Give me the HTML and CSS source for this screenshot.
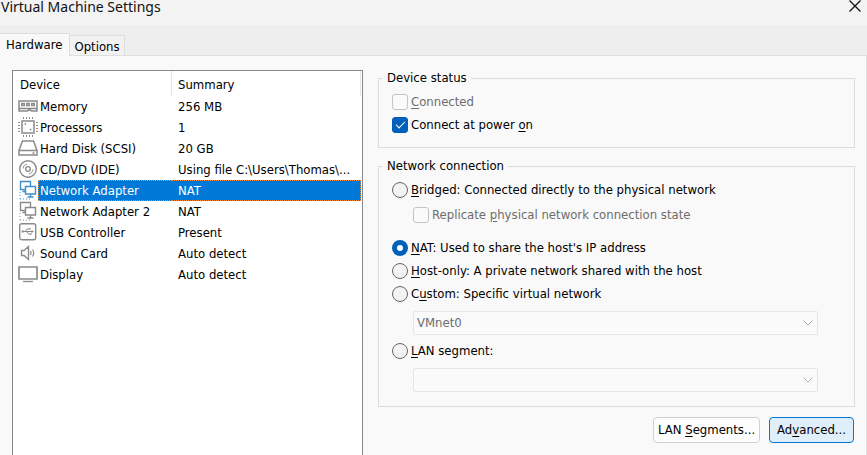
FILE: index.html
```html
<!DOCTYPE html>
<html lang="en">
<head>
<meta charset="utf-8">
<title>Virtual Machine Settings</title>
<link rel="stylesheet" href="styles.css">
</head>
<body>
<div class="window">
  <header class="titlebar">
    <h1 class="title">Virtual Machine Settings</h1>
    <button class="close" type="button" aria-label="Close">
      <svg width="14" height="14" viewBox="0 0 14 14"><path d="M1.500 .500l11 11M12.500 .500l-11 11" stroke="#111" stroke-width="1.300" fill="none"/></svg>
    </button>
  </header>

  <div class="tabs" role="tablist">
    <button class="tab active" type="button" role="tab" aria-selected="true">Hardware</button>
    <button class="tab" type="button" role="tab" aria-selected="false">Options</button>
  </div>

  <main class="page">
    <section class="list">
      <table class="devices">
        <colgroup><col class="col-icon"><col class="col-name"><col></colgroup>
        <thead>
          <tr><th colspan="2">Device</th><th>Summary</th></tr>
        </thead>
        <tbody>
          <tr>
            <td class="icon"><svg viewBox="0 0 20 21"><path d="M1 5h18v10h-5.500l-1-1h-2l-1 1H1zM1 12.500h18" stroke-width="1.500"/><path d="M3.700 7.500h2.600v2H3.700zM8.700 7.500h2.600v2H8.700zM13.700 7.500h2.600v2h-2.600z" stroke-width="1.400"/></svg></td>
            <td class="name">Memory</td><td class="summary">256 MB</td>
          </tr>
          <tr>
            <td class="icon"><svg viewBox="0 0 20 21"><path d="M4 4h12v12H4z" stroke-width="1.500"/><path d="M5.500 0v2M8.500 0v2M11.500 0v2M14.500 0v2M5.500 18v2M8.500 18v2M11.500 18v2M14.500 18v2M0 5.500h2M0 8.500h2M0 11.500h2M0 14.500h2M18 5.500h2M18 8.500h2M18 11.500h2M18 14.500h2"/><path d="M6.500 7h1.600M11.800 12.500h1.600" stroke-width="1.600"/></svg></td>
            <td class="name">Processors</td><td class="summary">1</td>
          </tr>
          <tr>
            <td class="icon"><svg viewBox="0 0 20 21"><path d="M4.500 3h11L19 12.500V17H1v-4.500zM1 12.500h18M14.500 15h2" stroke-width="1.500"/></svg></td>
            <td class="name">Hard Disk (SCSI)</td><td class="summary">20 GB</td>
          </tr>
          <tr>
            <td class="icon"><svg viewBox="0 0 20 21"><circle cx="10" cy="10" r="8.300" stroke-width="1.400"/><circle cx="10" cy="10" r="2.300" stroke-width="1.300"/><path d="M5 9.500c.3-2.300 1.700-3.900 4-4.400M15 10.500c-.3 2.300-1.700 3.900-4 4.400"/></svg></td>
            <td class="name">CD/DVD (IDE)</td><td class="summary">Using file C:\Users\Thomas\...</td>
          </tr>
          <tr class="selected">
            <td class="icon"><svg viewBox="0 0 20 21"><path d="M7 9.500H2.500v-8h10V6M4.500 11.500h2.500M7.500 6.500h10V14h-10zM12.500 14v2.500M9.500 17h6" stroke-width="1.400"/><path d="M2 12v7M2 19h10" stroke-dasharray="1 2"/></svg></td>
            <td class="name">Network Adapter</td><td class="summary">NAT</td>
          </tr>
          <tr>
            <td class="icon"><svg viewBox="0 0 20 21"><path d="M7 9.500H2.500v-8h10V6M4.500 11.500h2.500M7.500 6.500h10V14h-10zM12.500 14v2.500M9.500 17h6" stroke-width="1.400"/><path d="M2 12v7M2 19h10" stroke-dasharray="1 2"/></svg></td>
            <td class="name">Network Adapter 2</td><td class="summary">NAT</td>
          </tr>
          <tr>
            <td class="icon"><svg viewBox="0 0 20 21"><rect x="1.700" y="1.700" width="16" height="16" rx="2" stroke-width="1.400"/><path d="M5 9.500h9M7 9.500l2-2.500h2M8.500 9.500l2 2.500h1.500"/><path d="M3.700 8.500h2v2h-2zM13.500 8l2.500 1.500-2.500 1.500zM11 6h1.500v1.500H11zM12 11.200h1.500v1.500H12z" class="solid"/></svg></td>
            <td class="name">USB Controller</td><td class="summary">Present</td>
          </tr>
          <tr>
            <td class="icon"><svg viewBox="0 0 20 21"><path d="M3.500 7.500H6l4.500-4v13l-4.500-4H3.500z" stroke-width="1.400"/><path d="M12.500 8q1 2 0 4M14.500 6.500q2.500 3.500 0 7" stroke-width="1.200"/></svg></td>
            <td class="name">Sound Card</td><td class="summary">Auto detect</td>
          </tr>
          <tr>
            <td class="icon"><svg viewBox="0 0 20 21"><path d="M1 3h18v12H1z" stroke-width="1.700"/><path d="M5 17.500h10" stroke-width="1.300"/></svg></td>
            <td class="name">Display</td><td class="summary">Auto detect</td>
          </tr>
        </tbody>
      </table>
    </section>

    <form class="settings">
      <fieldset class="group status">
        <legend>Device status</legend>
        <label class="option off"><input type="checkbox" disabled><span><u>C</u>onnected</span></label>
        <label class="option"><input type="checkbox" checked><span>Connect at power <u>o</u>n</span></label>
      </fieldset>

      <fieldset class="group network">
        <legend>Network connection</legend>
        <label class="option"><input type="radio" name="net"><span><u>B</u>ridged: Connected directly to the physical network</span></label>
        <label class="option nested off"><input type="checkbox" disabled><span>Replicate <u>p</u>hysical network connection state</span></label>
        <label class="option"><input type="radio" name="net" checked><span><u>N</u>AT: Used to share the host's IP address</span></label>
        <label class="option"><input type="radio" name="net"><span><u>H</u>ost-only: A private network shared with the host</span></label>
        <label class="option"><input type="radio" name="net"><span>C<u>u</u>stom: Specific virtual network</span></label>
        <div class="picker">
          <select disabled aria-label="Virtual network"><option>VMnet0</option></select>
          <svg class="chevron" viewBox="0 0 10 6"><path d="M.5.500 5 5 9.500.500"/></svg>
        </div>
        <label class="option"><input type="radio" name="net"><span><u>L</u>AN segment:</span></label>
        <div class="picker">
          <select disabled aria-label="LAN segment"><option></option></select>
          <svg class="chevron" viewBox="0 0 10 6"><path d="M.5.500 5 5 9.500.500"/></svg>
        </div>
      </fieldset>

      <div class="actions">
        <button class="btn" type="button">LAN <u>S</u>egments...</button>
        <button class="btn focus" type="button">Ad<u>v</u>anced...</button>
      </div>
    </form>
  </main>
</div>
</body>
</html>
```

FILE: styles.css
```css
* { box-sizing: border-box; }

body {
  margin: 0;
  background: #f9f9f9;
  color: #000;
  font: 13px/16px "DejaVu Sans Condensed", "DejaVu Sans", sans-serif;
  font-stretch: condensed;
}

button, select, input { font: inherit; color: inherit; margin: 0; }
u { text-underline-offset: 2px; text-decoration-thickness: 1px; }

.window { min-height: 100vh; display: flex; flex-direction: column; }

.titlebar {
  height: 25px;
  display: flex;
  justify-content: space-between;
  align-items: flex-start;
  padding-right: 5px;
  background: #f3f3f3;
}
.title { margin: 0 0 0 1px; font: 14px/14px "Noto Sans", "Open Sans", sans-serif; color: #111; }
.close { border: 0; padding: 0; background: none; display: flex; }

.tabs { height: 31px; display: flex; align-items: flex-end; background: #eee; box-shadow: inset 0 -1px #dedede; }
.tab { height: 21px; padding: 3px 4px 1px; border: 1px solid #dedede; border-left: 0; border-bottom: 0; background: #f2f2f2; box-shadow: inset 0 -1px #dedede; }
.tab.active { height: 23px; padding: 1px 7px 2px 6px; background: #f9f9f9; box-shadow: none; }

.page {
  flex: 1;
  display: grid;
  grid-template-columns: 351fr 477fr;
  gap: 15px;
  padding: 14px 11px 0 12px;
  border-right: 1px solid #dedede;
}

.list { min-width: 0; padding: 0 1px; border: 1px solid #828790; border-bottom: 0; background: #fff; }
.devices { width: 100%; border-collapse: separate; border-spacing: 0; table-layout: fixed; }
.col-icon { width: 24px; }
.col-name { width: 134px; }
.devices th { height: 25px; padding: 2px 0 0 6px; text-align: left; font-weight: normal; border-right: 1px solid #e5e5e5; }
.devices td { height: 21px; padding: 0; white-space: nowrap; }
.devices .icon { padding-left: 4px; }
.devices .name { padding-left: 2px; }
.devices .summary { padding-left: 6px; }
.icon svg { display: block; width: 20px; height: 21px; fill: none; stroke: #8a8a8a; }
.icon .solid { fill: #8a8a8a; stroke: none; }
.selected .icon svg { stroke: #3f8fcb; }
.selected .name, .selected .summary {
  background: #0078d7;
  color: #fff;
  border: 1px dotted #ff8728;
  border-width: 1px 0;
}
.devices .selected .name { border-left-width: 1px; padding-left: 1px; }
.selected .summary { border-right-width: 1px; }

.settings { min-width: 0; display: flex; flex-direction: column; }
.group { min-width: 0; margin: 0; border: 1px solid #dcdcdc; }
.group legend { padding: 0 4px; margin-left: -9px; }
.status { padding: 0 13px 11px; }
.network { padding: 4px 13px 10px; margin-top: 10px; }

.option { display: flex; align-items: center; gap: 3px; height: 23px; }
.status .option:first-of-type { margin-top: 4px; }
.option.nested { margin: 2px 0 10px 21px; }
.option.off { color: #6d6d6d; }
.option input {
  appearance: none;
  flex: none;
  width: 16px;
  height: 16px;
  border: 1px solid #666;
  background: #f3f3f3;
}
.option input[type="radio"] { border-radius: 50%; }
.option input[type="radio"]:checked { border: 5px solid #005fb8; background: #fff; }
.option input[type="checkbox"] { border-radius: 3px; display: grid; place-items: center; }
.option input[type="checkbox"]:disabled { border-color: #c4c4c4; background: #fafafa; }
.option input[type="checkbox"]:checked { border-color: #005fb8; background: #005fb8; }
.option input[type="checkbox"]:checked::before {
  content: "";
  width: 8px;
  height: 4px;
  margin-bottom: 2px;
  border: solid #fff;
  border-width: 0 0 1px 1px;
  transform: rotate(-45deg);
}

.picker { position: relative; margin: 6px 23px 4px 21px; }
.picker select {
  appearance: none;
  display: block;
  width: 100%;
  height: 24px;
  padding: 0 3px;
  border: 1px solid #e6e6e6;
  border-radius: 2px;
  background: #fafafa;
  color: #6d6d6d;
  opacity: 1;
}
.chevron { position: absolute; right: 5px; top: 9px; width: 10px; height: 6px; fill: none; stroke: #b0b0b0; }

.actions { display: flex; justify-content: flex-end; gap: 9px; margin: 10px 1px 11px 0; }
.btn { height: 26px; padding: 0 4px; border: 1px solid #d0d0d0; border-radius: 4px; background: #fdfdfd; }
.btn.focus { padding: 0 7px; border-color: #0078d4; background: #e0eef9; }
```
